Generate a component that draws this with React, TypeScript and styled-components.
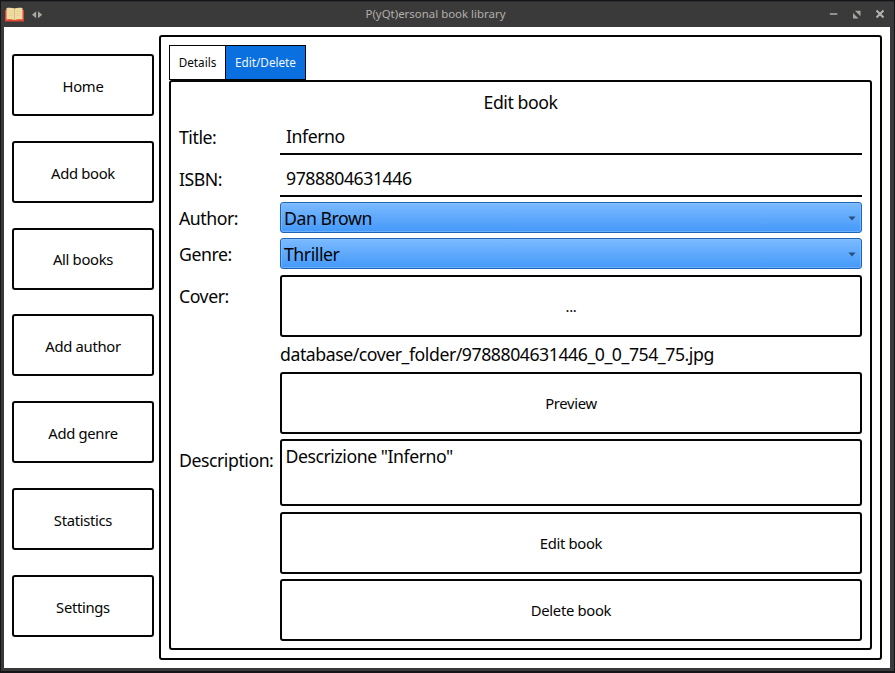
import React from "react";
import styled, { createGlobalStyle, css } from "styled-components";

const GlobalStyle = createGlobalStyle`
  *, *::before, *::after { box-sizing: border-box; }
  body { margin: 0; background: #151418; overflow: hidden; }
  button, input, textarea { font: inherit; color: inherit; letter-spacing: inherit; }
`;

const Window = styled.div`
  width: 895px;
  height: 673px;
  display: flex;
  flex-direction: column;
  padding: 1px 1px 2px;
  background: #151418;
  font-family: "Noto Sans", sans-serif;
  color: #050505;
`;

const TitleBar = styled.header`
  height: 26px;
  flex: none;
  display: grid;
  grid-template-columns: 100px 1fr 100px;
  align-items: center;
  background: #3a3a3a;
  border-top: 1px solid #2b2b2b;
`;

const AppMarks = styled.div`
  display: flex;
  align-items: center;
  gap: 6px;
  padding-left: 3px;
  svg { display: block; }
`;

const WindowTitle = styled.h1`
  margin: 0;
  padding: 0 24px 1px 0;
  text-align: center;
  font-size: 11.45px;
  font-weight: 400;
  line-height: 16px;
  color: #b3afaa;
`;

const WindowControls = styled.div`
  display: flex;
  justify-content: flex-end;
  align-items: center;
  gap: 14px;
  padding: 0 9px 1px 0;
  svg { display: block; }
`;

const Body = styled.div`
  flex: 1;
  min-height: 0;
  display: flex;
  gap: 5px;
  background: #fff;
  border: solid #393939;
  border-width: 0 4px 3px 3px;
  padding: 8px;
`;

const outline = css`
  border: 2px solid #050505;
  border-radius: 3px;
  background: #fff;
`;

const Sidebar = styled.nav`
  width: 142px;
  flex: none;
  padding-top: 19px;
  display: flex;
  flex-direction: column;
  gap: 24.8px;
`;

const PushButton = styled.button`
  ${outline}
  display: block;
  width: 100%;
  height: 62px;
  flex: none;
  padding: 0 0 1px;
  font-size: 14.8px;
  letter-spacing: -0.31px;
  line-height: 20px;
`;

const NavButton = styled(PushButton)`
  padding: 1.6px 0 0;
`;

const MainPanel = styled.main`
  ${outline}
  flex: 1;
  min-width: 0;
  padding: 8px;
  display: flex;
  flex-direction: column;
`;

const Tabs = styled.div`
  display: flex;
  height: 35px;
  flex: none;
`;

const Tab = styled.button<{ $active?: boolean; $width: number }>`
  width: ${(p) => p.$width}px;
  padding: 0 0 1px;
  border: 1px solid #050505;
  border-right-width: ${(p) => (p.$active ? 1 : 0)}px;
  background: ${(p) => (p.$active ? "#0a70e0" : "#fff")};
  color: ${(p) => (p.$active ? "#f4f8ff" : "#050505")};
  font-size: 11.7px;
  line-height: 18px;
`;

const TabPage = styled.section`
  ${outline}
  flex: 1;
  min-height: 0;
  padding: 8px 8px 0;
`;

const FormTitle = styled.h2`
  margin: 0;
  height: 25px;
  font-size: 17.7px;
  letter-spacing: -0.46px;
  line-height: 24px;
  font-weight: 400;
  text-align: center;
`;

const Form = styled.div`
  display: grid;
  grid-template-columns: 95px 582px;
  grid-template-rows: 47px 40px 36px 37px 62px 35px 67px 73px 67px 62px;
  column-gap: 6px;
  font-size: 17.7px;
  letter-spacing: -0.46px;
`;

const Label = styled.label<{ $row: number; $top: number }>`
  grid-column: 1;
  grid-row: ${(p) => p.$row};
  margin-top: ${(p) => p.$top}px;
  line-height: 24px;
  white-space: nowrap;
`;

const Cell = styled.div<{ $row: number }>`
  grid-column: 2;
  grid-row: ${(p) => p.$row};
`;

const LineEdit = styled.input<{ $height: number; $top?: number; $bottom?: number }>`
  display: block;
  width: 100%;
  height: ${(p) => p.$height}px;
  border: 0;
  border-bottom: 2px solid #050505;
  padding: ${(p) => p.$top ?? 0}px 6px ${(p) => p.$bottom ?? 0}px;
  background: #fff;
  outline: none;
`;

const Combo = styled.div`
  height: 31px;
  display: flex;
  align-items: center;
  justify-content: space-between;
  padding: 1px 5px 0 3px;
  border: 1px solid #1f65b5;
  border-radius: 3px;
  background: linear-gradient(#7bbaff, #4499fa);
  box-shadow: inset 0 0 0 1px rgba(150, 205, 255, 0.45);
  line-height: 28px;
  svg { display: block; }
`;

const CoverPath = styled.div`
  padding-top: 5px;
  line-height: 24px;
  white-space: nowrap;
`;

const TextArea = styled.textarea`
  ${outline}
  display: block;
  width: 100%;
  height: 67px;
  padding: 3px 3.5px;
  resize: none;
  outline: none;
  line-height: 24px;
`;

const menu = ["Home", "Add book", "All books", "Add author", "Add genre", "Statistics", "Settings"];

const BookIcon = () => (
  <svg width="21" height="16" viewBox="0 0 21 16">
    <path d="M1 3h19v11.5H1z" fill="#df4632" />
    <path d="M2.500 1c3-.6 6-.4 8 .5 2-.9 5-1.100 8-.5v11.500c-3-.5-6-.300-8 .8-2-1.100-5-1.300-8-.8z" fill="#f0dca2" />
    <path d="M10.500 1.500v11.500" stroke="#d3bd80" />
    <path d="M5 4.500h3.500M5 6.500h3.500M5 8.500h3.500M12.500 4.500H16M12.500 6.500H16M12.500 8.500H16" stroke="#e0cb90" strokeWidth=".6" />
  </svg>
);

const SplitIcon = () => (
  <svg width="12" height="8" viewBox="0 0 12 8" fill="#aaa7a3">
    <path d="M5.200 .3v7L1 3.800zM7 .3v7L11.200 3.800z" />
  </svg>
);

const MinimizeIcon = () => (
  <svg width="9" height="10" viewBox="0 0 9 10">
    <path d="M.8 5h7.500" stroke="#b3afaa" strokeWidth="1.500" />
  </svg>
);

const RestoreIcon = () => (
  <svg width="9" height="9" viewBox="0 0 9 9" fill="#aaa7a3">
    <path d="M3 .8H8.500v5.500zM1 3L6.500 8.500H1z" />
  </svg>
);

const CloseIcon = () => (
  <svg width="10" height="10" viewBox="0 0 10 10">
    <path d="M1.500 1.500l7 7M8.500 1.500l-7 7" stroke="#b9b5b0" strokeWidth="1.900" />
  </svg>
);

const DropArrow = () => (
  <svg width="8" height="5" viewBox="0 0 8 5">
    <path d="M.5.5h7L4 4.500z" fill="#294d79" />
  </svg>
);

export default function App() {
  return (
    <>
      <GlobalStyle />
      <Window>
        <TitleBar>
          <AppMarks>
            <BookIcon />
            <SplitIcon />
          </AppMarks>
          <WindowTitle>P(yQt)ersonal book library</WindowTitle>
          <WindowControls>
            <MinimizeIcon />
            <RestoreIcon />
            <CloseIcon />
          </WindowControls>
        </TitleBar>
        <Body>
          <Sidebar>
            {menu.map((name) => (
              <NavButton key={name}>{name}</NavButton>
            ))}
          </Sidebar>
          <MainPanel>
            <Tabs>
              <Tab $width={56}>Details</Tab>
              <Tab $width={81} $active>Edit/Delete</Tab>
            </Tabs>
            <TabPage>
              <FormTitle>Edit book</FormTitle>
              <Form>
                <Label $row={1} $top={10}>Title:</Label>
                <Cell $row={1}><LineEdit $height={40} $top={4} defaultValue="Inferno" /></Cell>
                <Label $row={2} $top={5}>ISBN:</Label>
                <Cell $row={2}><LineEdit $height={35} $bottom={2} defaultValue="9788804631446" /></Cell>
                <Label $row={3} $top={4}>Author:</Label>
                <Cell $row={3}><Combo>Dan Brown<DropArrow /></Combo></Cell>
                <Label $row={4} $top={4}>Genre:</Label>
                <Cell $row={4}><Combo>Thriller<DropArrow /></Combo></Cell>
                <Label $row={5} $top={9}>Cover:</Label>
                <Cell $row={5}><PushButton>...</PushButton></Cell>
                <Cell $row={6}><CoverPath>database/cover_folder/9788804631446_0_0_754_75.jpg</CoverPath></Cell>
                <Cell $row={7}><PushButton>Preview</PushButton></Cell>
                <Label $row={8} $top={9}>Description:</Label>
                <Cell $row={8}><TextArea defaultValue={'Descrizione "Inferno"'} /></Cell>
                <Cell $row={9}><PushButton>Edit book</PushButton></Cell>
                <Cell $row={10}><PushButton>Delete book</PushButton></Cell>
              </Form>
            </TabPage>
          </MainPanel>
        </Body>
      </Window>
    </>
  );
}
